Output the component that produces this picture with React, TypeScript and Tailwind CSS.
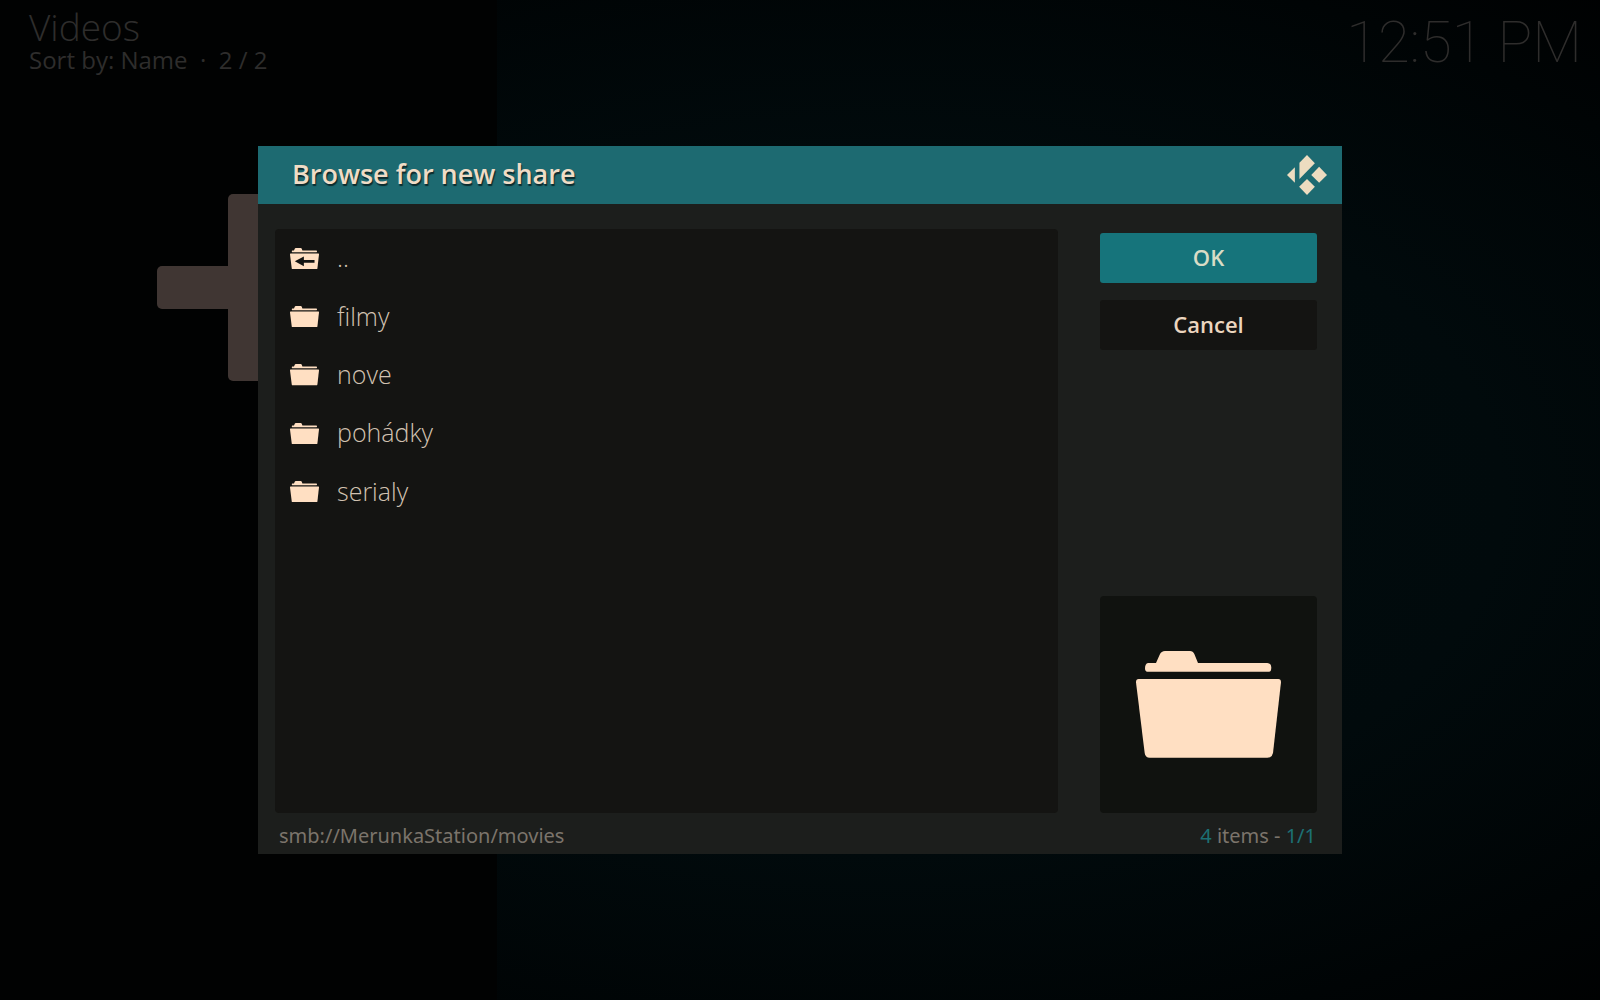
// src/App.tsx
import React, { useState } from 'react';

interface FolderIconProps {
  up?: boolean;
  className?: string;
}

interface Entry {
  name: string;
  up?: boolean;
}

const entries: Entry[] = [
  { name: '..', up: true },
  { name: 'filmy' },
  { name: 'nove' },
  { name: 'pohádky' },
  { name: 'serialy' },
];

const FolderIcon: React.FC<FolderIconProps> = ({ up = false, className = '' }) => (
  <svg viewBox="0 0 435 320" fill="currentColor" className={className} aria-hidden="true">
    <path d="M36 36H60L71 11Q76 0 87 0H162Q171 0 175 9L186 36H394Q406 37 406 50Q406 62 399 62H34Q27 62 27 52Q27 38 36 36Z" />
    <path d="M8 84H427Q435 84 435 94L411 306Q408 320 394 320H41Q28 320 26 306L0 94Q0 84 8 84Z" />
    {up && <path d="M72 200L208 128V180H368V220H208V272Z" className="text-[#141412]" />}
  </svg>
);

const KodiLogo: React.FC<{ className?: string }> = ({ className = '' }) => (
  <svg viewBox="0 0 122 122" fill="currentColor" className={className} aria-hidden="true">
    <path d="M61 0L85 25L38 73V24Z" />
    <path d="M0 61L24 37V85Z" />
    <path d="M98 36L122 61L98 85L74 61Z" />
    <path d="M61 73L85 97L61 122L37 97Z" />
  </svg>
);

const VideosScreen: React.FC = () => (
  <div className="min-h-screen bg-[linear-gradient(to_right,#010202_497px,transparent_497px),radial-gradient(ellipse_at_55%_50%,#020d0f_0%,#010a0c_50%,#000405_78%,#000_100%)]">
    <header className="flex items-start justify-between pl-[29px] pr-[18px] text-[#2e2d2c]">
      <div className="pt-2">
        <h1 className="text-[37px] font-light leading-[38px]">Videos</h1>
        <p className="mt-0.5 whitespace-pre text-2xl leading-6">Sort by: Name  ·  2 / 2</p>
      </div>
      <time className="pt-3 font-[Roboto,sans-serif] text-[58px] font-thin leading-[60px]">12:51 PM</time>
    </header>
    <svg viewBox="0 0 186 187" fill="#403633" className="ml-[157px] mt-[122px] w-[186px]" aria-hidden="true">
      <rect x="0" y="72" width="186" height="43" rx="5" />
      <rect x="71" y="0" width="44" height="187" rx="5" />
    </svg>
  </div>
);

const BrowseDialog: React.FC = () => {
  const [selected, setSelected] = useState('');

  return (
    <div
      role="dialog"
      aria-labelledby="browse-title"
      className="w-full max-w-[1084px] bg-[#1c1e1c]"
    >
      <header className="flex h-[58px] items-center justify-between bg-[#1d6a71] pl-[34px] pr-[15px]">
        <h2
          id="browse-title"
          className="pb-0.5 text-[27px] font-semibold leading-8 text-[#efdcc6] [text-shadow:1px_2px_1px_rgba(0,0,0,0.6)]"
        >
          Browse for new share
        </h2>
        <KodiLogo className="size-10 text-[#eddcc0]" />
      </header>

      <div className="flex gap-[42px] pl-[17px] pr-[25px] pt-[25px]">
        <ul className="grid min-h-[584px] flex-1 grid-rows-10 rounded-sm bg-[#141412]">
          {entries.map(entry => (
            <li key={entry.name} className="flex">
              <button
                type="button"
                onClick={() => setSelected(entry.name)}
                aria-pressed={selected === entry.name}
                className="flex w-full items-center gap-[18px] px-[15px] text-left"
              >
                <FolderIcon up={entry.up} className="w-[29px] text-[#ffdfc2]" />
                <span className="pb-0.5 text-[25px] font-light leading-8 text-[#d2c2b1]">{entry.name}</span>
              </button>
            </li>
          ))}
        </ul>

        <div className="flex w-[217px] flex-col gap-[17px] pt-1">
          <button
            type="button"
            className="h-[50px] rounded-[3px] bg-[#16747b] pb-0.5 text-[22px] font-semibold text-[#d9dcc6]"
          >
            OK
          </button>
          <button
            type="button"
            className="h-[50px] rounded-[3px] bg-[#141412] pb-0.5 text-[22px] font-semibold text-[#ecd6bf]"
          >
            Cancel
          </button>
          <div className="mt-auto flex aspect-square items-center justify-center rounded-sm bg-[#10120f]">
            <FolderIcon className="w-[145px] text-[#ffdfc2]" />
          </div>
        </div>
      </div>

      <footer className="flex h-[41px] items-center justify-between pl-[21px] pr-[26px] pt-1 font-['Noto_Sans',sans-serif] text-xl text-[#7b746b]">
        <span>smb://MerunkaStation/movies</span>
        <span>
          <span className="text-[#1c7074]">4</span> items - <span className="text-[#1c7074]">1/1</span>
        </span>
      </footer>
    </div>
  );
};

const App: React.FC = () => (
  <div className="relative min-h-screen overflow-hidden bg-black font-['Open_Sans','Noto_Sans',sans-serif]">
    <VideosScreen />
    <div className="absolute inset-0 flex items-center justify-center">
      <BrowseDialog />
    </div>
  </div>
);

export default App;
